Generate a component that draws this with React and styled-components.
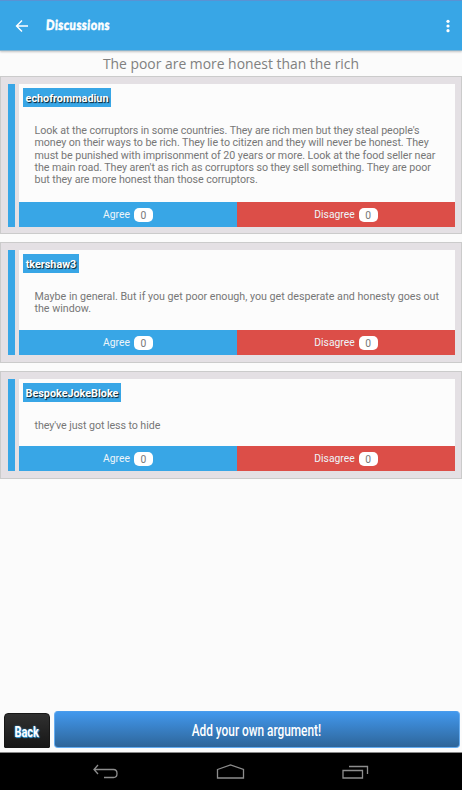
import React from 'react';
import styled, { createGlobalStyle } from 'styled-components';

const GlobalStyle = createGlobalStyle`
  * {
    box-sizing: border-box;
  }

  body {
    margin: 0;
    background: #fbfbfb;
    font-family: Roboto, "Liberation Sans", sans-serif;
  }
`;

const Screen = styled.div`
  display: flex;
  flex-direction: column;
  width: 462px;
  height: 790px;
  overflow: hidden;
  background: #fbfbfb;
`;

const Header = styled.header`
  display: flex;
  flex: none;
  align-items: center;
  height: 51px;
  padding: 0 10px 0 14px;
  background: #38a6e6;
  border-top: 1px solid #5a92d4;
  border-bottom: 1px solid #86b4cf;
  box-shadow: 0 1px 2px rgba(0, 0, 0, 0.22);
`;

const HeaderTitle = styled.h1`
  flex: 1;
  margin: 0 0 2px 17px;
  color: #fff;
  font-family: Lato, sans-serif;
  font-size: 14px;
  font-weight: 900;
  line-height: 20px;
  white-space: nowrap;

  span {
    display: inline-block;
    letter-spacing: 0.6px;
    transform: scaleX(0.8) skewX(-4deg);
    transform-origin: left center;
    -webkit-text-stroke: 0.5px #fff;
  }
`;

const Topic = styled.h2`
  flex: none;
  height: 25px;
  margin: 0;
  color: #808080;
  font-family: "Open Sans", sans-serif;
  font-size: 13.9px;
  font-weight: 400;
  line-height: 26px;
  text-align: center;
  white-space: nowrap;
`;

const List = styled.main`
  display: flex;
  flex: 1;
  flex-direction: column;
  gap: 8px;
`;

const Card = styled.article`
  display: flex;
  flex: none;
  gap: 4px;
  height: ${({ $height }) => $height}px;
  padding: 7px 6px ${({ $bottom }) => $bottom}px 7px;
  background: #e4e0e4;
  border: 1px solid #cbcbcb;
`;

const Stripe = styled.div`
  width: 7px;
  background: #38a6e6;
`;

const Content = styled.div`
  display: flex;
  flex: 1;
  flex-direction: column;
  background: #fcfcfc;
`;

const Author = styled.div`
  align-self: flex-start;
  width: ${({ $width }) => $width}px;
  height: 19px;
  margin: 4px 0 0 4px;
  background: #38a6e6;
  color: #fff;
  font-size: 10.8px;
  font-weight: 700;
  line-height: 21px;
  text-align: center;
  text-shadow: 1px 1px 1px rgba(0, 0, 0, 0.85);
  white-space: nowrap;
`;

const Argument = styled.p`
  flex: 1;
  margin: 18px 0 0 15.5px;
  color: #777;
  font-size: 10.7px;
  letter-spacing: ${({ $spacing }) => $spacing}px;
  line-height: 12.35px;
  white-space: pre;
`;

const Votes = styled.div`
  display: grid;
  grid-template-columns: 1fr 1fr;
  height: 25px;
`;

const VoteButton = styled.button`
  display: flex;
  align-items: center;
  justify-content: center;
  gap: 4px;
  padding: 0;
  border: 0;
  background: ${({ $color }) => $color};
  color: #eef5f9;
  font-family: inherit;
  font-size: 10.3px;
`;

const Count = styled.span`
  width: 19px;
  height: 14px;
  border-radius: 5px;
  background: #fff;
  color: #777;
  line-height: 15px;
  text-align: center;
`;

const Footer = styled.footer`
  display: flex;
  flex: none;
  align-items: flex-end;
  gap: 4px;
  height: 41px;
  padding: 0 2px 4px 4px;
`;

const Condensed = styled.span`
  display: inline-block;
  transform: scaleX(${({ $scale }) => $scale});
  white-space: nowrap;
`;

const FooterButton = styled.button`
  display: flex;
  align-items: center;
  justify-content: center;
  padding: 0;
  color: #fff;
  font-family: Roboto, sans-serif;
  font-weight: 500;
`;

const BackButton = styled(FooterButton)`
  width: 46px;
  height: 35px;
  padding-top: 2px;
  border: 1px solid #171717;
  border-radius: 4px 4px 1px 1px;
  background: linear-gradient(#303030, #171717);
  font-size: 14px;
  font-weight: 700;
  text-shadow: 0 0 2px #38a6e6, 1px 1px 1px #38a6e6;
`;

const AddButton = styled(FooterButton)`
  flex: 1;
  height: 37px;
  padding: 2px 2px 0 0;
  border: 1px solid #65acf0;
  border-top-color: #4a9cec;
  border-radius: 4px;
  background: linear-gradient(#4298ed, #2e6599);
  font-size: 16px;
`;

const NavBar = styled.nav`
  display: flex;
  flex: none;
  align-items: flex-start;
  justify-content: center;
  gap: 97px;
  height: 38px;
  padding: 11px 2px 0 0;
  border-top: 1px solid #888;
  background: #000;

  svg {
    fill: none;
    stroke: #8d8d8d;
    stroke-width: 1.3;
  }
`;

const posts = [
  {
    author: 'echofrommadiun',
    tagWidth: 88,
    height: 158,
    bottom: 6,
    spacing: -0.065,
    lines: [
      'Look at the corruptors in some countries. They are rich men but they steal people\'s',
      'money on their ways to be rich. They lie to citizen and they will never be honest. They',
      'must be punished with imprisonment of 20 years or more. Look at the food seller near',
      'the main road. They aren\'t as rich as corruptors so they sell something. They are poor',
      'but they are more honest than those corruptors.',
    ],
  },
  {
    author: 'tkershaw3',
    tagWidth: 56,
    height: 121,
    bottom: 7,
    spacing: -0.01,
    lines: [
      'Maybe in general. But if you get poor enough, you get desperate and honesty goes out',
      'the window.',
    ],
  },
  {
    author: 'BespokeJokeBloke',
    tagWidth: 98,
    height: 108,
    bottom: 7,
    spacing: -0.08,
    lines: ['they\'ve just got less to hide'],
  },
];

const Vote = ({ label, color }) => (
  <VoteButton $color={color}>
    {label}
    <Count>0</Count>
  </VoteButton>
);

const Post = ({ author, tagWidth, height, bottom, spacing, lines }) => (
  <Card $height={height} $bottom={bottom}>
    <Stripe />
    <Content>
      <Author $width={tagWidth}>{author}</Author>
      <Argument $spacing={spacing}>{lines.join('\n')}</Argument>
      <Votes>
        <Vote label="Agree" color="#38a6e6" />
        <Vote label="Disagree" color="#dc4e48" />
      </Votes>
    </Content>
  </Card>
);

const App = () => (
  <>
    <GlobalStyle />
    <Screen>
      <Header>
        <svg width="15" height="14" viewBox="0 0 15 14" fill="none" stroke="#fff" strokeWidth="1.4">
          <path d="M8 1.5 2.5 7 8 12.5M2.5 7H14" />
        </svg>
        <HeaderTitle><span>Discussions</span></HeaderTitle>
        <svg width="8" height="14" viewBox="0 0 8 14" fill="#fff">
          <circle cx="4" cy="2.3" r="1.6" />
          <circle cx="4" cy="7" r="1.6" />
          <circle cx="4" cy="11.7" r="1.6" />
        </svg>
      </Header>
      <Topic>The poor are more honest than the rich</Topic>
      <List>
        {posts.map((post) => <Post key={post.author} {...post} />)}
      </List>
      <Footer>
        <BackButton><Condensed $scale={0.78}>Back</Condensed></BackButton>
        <AddButton><Condensed $scale={0.74}>Add your own argument!</Condensed></AddButton>
      </Footer>
      <NavBar>
        <svg width="27" height="16" viewBox="0 0 27 16">
          <path d="M6 1 2 5.5 6 10M2 5.5H21.5Q25 5.5 25 9.5T21.5 13.5H12" />
        </svg>
        <svg width="29" height="16" viewBox="0 0 29 16">
          <path d="M1.5 5.5 14.5 1 27.5 5.5V14H1.5Z" />
        </svg>
        <svg width="27" height="16" viewBox="0 0 27 16">
          <path d="M1 6.5H20.5V14H1ZM7 2.5H25.5V10" />
        </svg>
      </NavBar>
    </Screen>
  </>
);

export default App;
